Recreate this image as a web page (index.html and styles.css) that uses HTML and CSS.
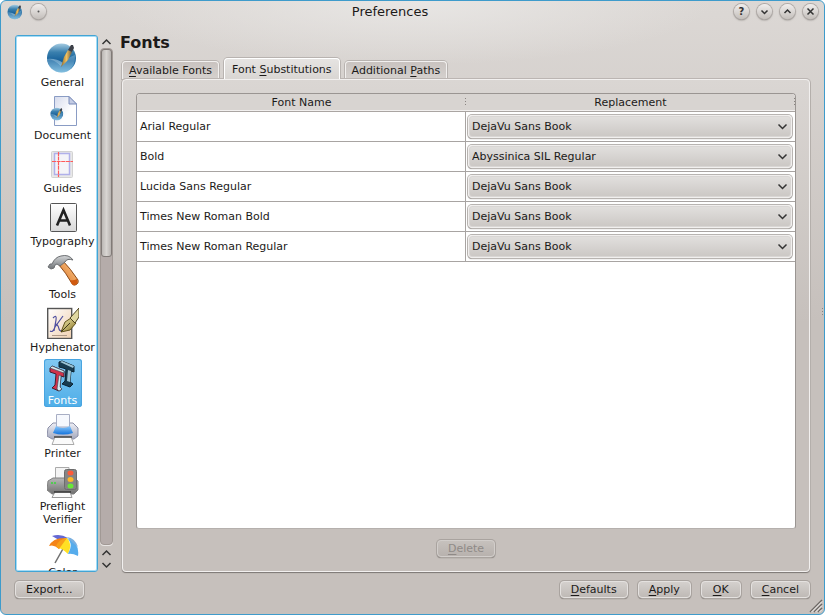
FILE: index.html
```html
<!DOCTYPE html>
<html lang="en">
<head>
<meta charset="utf-8">
<title>Preferences</title>
<link rel="stylesheet" href="styles.css">
</head>
<body>
<svg class="defs" width="0" height="0" aria-hidden="true">
  <defs>
    <linearGradient id="ball" x1="0" y1="0" x2="0" y2="1"><stop offset="0" stop-color="#a4cbe2"/><stop offset=".3" stop-color="#3a80ae"/><stop offset=".6" stop-color="#16609a"/><stop offset="1" stop-color="#6fb3d8"/></linearGradient>
    <linearGradient id="brush" x1="0" y1="0" x2="1" y2="0"><stop offset="0" stop-color="#8a6a30"/><stop offset=".5" stop-color="#f0c060"/><stop offset="1" stop-color="#6a5a40"/></linearGradient>
    <linearGradient id="paper" x1="0" y1="0" x2="1" y2="1"><stop offset="0" stop-color="#d5daec"/><stop offset=".6" stop-color="#ffffff"/></linearGradient>
    <linearGradient id="key" x1="0" y1="0" x2="0" y2="1"><stop offset="0" stop-color="#ffffff"/><stop offset="1" stop-color="#d8d8d8"/></linearGradient>
    <linearGradient id="steel" x1="0" y1="0" x2="0" y2="1"><stop offset="0" stop-color="#d4d6d8"/><stop offset="1" stop-color="#6f7377"/></linearGradient>
    <linearGradient id="wood" x1="0" y1="1" x2="1" y2="0"><stop offset="0" stop-color="#d86a18"/><stop offset="1" stop-color="#ffd49a"/></linearGradient>
    <linearGradient id="gold" x1="0" y1="0" x2="1" y2="1"><stop offset="0" stop-color="#f6efb8"/><stop offset="1" stop-color="#8a7420"/></linearGradient>
    <linearGradient id="sheet" x1="0" y1="0" x2="1" y2="1"><stop offset="0" stop-color="#ffffff"/><stop offset="1" stop-color="#f0d0b0"/></linearGradient>
    <linearGradient id="blue" x1="0" y1="0" x2="0" y2="1"><stop offset="0" stop-color="#8cc8fa"/><stop offset="1" stop-color="#1474dc"/></linearGradient>
    <linearGradient id="shell" x1="0" y1="0" x2="0" y2="1"><stop offset="0" stop-color="#eeeff6"/><stop offset="1" stop-color="#a4a8bc"/></linearGradient>
    <linearGradient id="dark" x1="0" y1="0" x2="0" y2="1"><stop offset="0" stop-color="#b8b8b8"/><stop offset="1" stop-color="#707070"/></linearGradient>
    <symbol id="globe" viewBox="0 0 32 32">
      <circle cx="15.500" cy="16" r="14.500" fill="url(#ball)"/>
      <path d="M1 17 Q8 17 15 23 Q20 16 29 13 Q30 25 20 30 Q8 32 3 24Z" fill="#a5d4ee" opacity=".35"/>
      <path d="M1 17 Q8 17 15 24 L17 21 Q10 16 1 17Z" fill="#c0e0f2" opacity=".5"/>
      <path d="M15 25 L18 15 L22 8 L26 10 L22 18Z" fill="url(#brush)"/>
      <path d="M22 8 L25 3 L27 3 L28 6 L26 10Z" fill="#3c4048"/>
    </symbol>
  </defs>
</svg>

<div class="window">
  <header class="titlebar">
    <div class="title-buttons">
      <svg class="app-icon" aria-hidden="true"><use href="#globe"/></svg>
      <button class="round" aria-label="On all desktops"><svg viewBox="0 0 15 15"><circle cx="7.500" cy="7.500" r="1" fill="#555"/></svg></button>
    </div>
    <h1 class="title">Preferences</h1>
    <div class="title-buttons">
      <button class="round help" aria-label="Help">?</button>
      <button class="round" aria-label="Minimize"><svg viewBox="0 0 15 15"><path d="M4.500 6.500L7.500 9.500L10.500 6.500"/></svg></button>
      <button class="round" aria-label="Maximize"><svg viewBox="0 0 15 15"><path d="M4.500 9L7.500 6L10.500 9"/></svg></button>
      <button class="round" aria-label="Close"><svg viewBox="0 0 15 15"><path d="M4.500 4.500L10.500 10.500M10.500 4.500L4.500 10.500"/></svg></button>
    </div>
  </header>

  <div class="content">
    <nav class="sidebar" aria-label="Sections">
      <div class="viewport">
        <div class="list">
          <button class="item"><svg viewBox="0 0 32 32"><use href="#globe"/></svg><span>General</span></button>
          <button class="item"><svg viewBox="0 0 32 32"><path d="M7.500 1.500H22L29.500 9V30.500H7.500Z" fill="url(#paper)" stroke="#8a9cc4"/><path d="M22 1.500V9H29.500Z" fill="#c4cce4" stroke="#7a8cba"/><svg x="3" y="12" width="14" height="14"><use href="#globe"/></svg></svg><span>Document</span></button>
          <button class="item"><svg viewBox="0 0 32 32"><rect x="5.500" y="3.500" width="21" height="26" rx="1" fill="#e8e8e8" stroke="#d2d2d2"/><rect x="8.500" y="5.500" width="15" height="21" fill="#f4f4f8" stroke="#b0b0ea" stroke-width="1.500"/><path d="M12.500 4V29M6 13.500H27" fill="none" stroke="#ff5a5a" stroke-width="1.200" stroke-dasharray="4 .6"/></svg><span>Guides</span></button>
          <button class="item"><svg viewBox="0 0 32 32"><rect x="3.500" y="2.500" width="26" height="28" rx="1" fill="url(#key)" stroke="#555"/><path d="M10 24.500L16.500 9L23 24.500M12 19.500H21" fill="none" stroke="#222" stroke-width="2.600"/></svg><span>Typography</span></button>
          <button class="item"><svg viewBox="0 0 32 32"><path d="M12 11L16 7Q23 14 31 26Q32 30 28 31Q26 32 24 28Q19 19 12 11Z" fill="url(#wood)" stroke="#8c4a18"/><path d="M23 26Q26 27 30 25Q32 30 28 31Q26 32 24 29Z" fill="#d05a10"/><path d="M1 13L3 10L5 10Q8 3 14 2Q22 0 26 6Q20 4 18 8L13 12L10 10L8 11L7 14L4 15Z" fill="url(#steel)" stroke="#6c6f72"/></svg><span>Tools</span></button>
          <button class="item"><svg viewBox="0 0 32 32"><rect x=".7" y="1.500" width="24" height="30" fill="url(#sheet)" stroke="#555" stroke-width="1.400"/><path d="M6 11Q10 7 9 13L7 24M3 24Q6 26 8 20L16 9M8 17Q11 17 12 22Q13 25 16 23" fill="none" stroke="#5050a0" stroke-width="1.200"/><path d="M5 28.500H20" stroke="#b09a88"/><path d="M14 25L18 15L24 11L29 16L23 23Z" fill="url(#gold)" stroke="#62541c"/><path d="M23 11L32 1V10L28 16Z" fill="#e0d8a0" stroke="#4c4220"/><path d="M14 25L23 16" stroke="#403818"/></svg><span>Hyphenator</span></button>
          <button class="item selected" aria-current="page"><svg viewBox="0 0 32 32"><path d="M12 2L15 1L27 6V12L24 11L23 22L26 24L23 27L15 24L18 21L19 9L16 8L12 7Z" fill="#183c50" stroke="#0c2230"/><path d="M13 2L15 1L27 6L26 8ZM21 10L24 11L23 22L20 21Z" fill="#9cc4d4"/><path d="M3 8L5 6L17 11V17L14 16L13 27L15 29L12 31L5 28L8 25L9 14L6 13L3 12Z" fill="#d0324a" stroke="#402030"/><path d="M3 8L5 6L17 11V13ZM12 15L14 16L13 27L15 29L12 31L10 29Z" fill="#d6e8ee" stroke="#304858" stroke-width=".6"/></svg><span>Fonts</span></button>
          <button class="item"><svg viewBox="0 0 32 32"><path d="M1 15L6 10H26L31 15V23L27 26H5L0 23Z" fill="url(#shell)" stroke="#8c90a8"/><path d="M9.500 1.500H22.500V14H9.500Z" fill="#f6f8fd" stroke="#a8aec4"/><path d="M9 13Q16 17 23 13L26 20Q16 23 6 20Z" fill="url(#blue)"/><path d="M8 24H24L27 31.500H5Z" fill="#fafafa" stroke="#aaa"/><path d="M7 24H25" stroke="#444" stroke-width="1.500"/></svg><span>Printer</span></button>
          <button class="item"><svg viewBox="0 0 32 32"><path d="M8.500 1.500H22V13H8.500Z" fill="#f4f4f4" stroke="#aaa"/><path d="M1 15L6 12H26L31 15V24L27 28H5L0 24Z" fill="url(#dark)" stroke="#808080"/><circle cx="5" cy="17" r="1" fill="#38d838"/><circle cx="8" cy="17" r="1" fill="#38d838"/><path d="M8 26H23L25 31.500H5Z" fill="#fafafa" stroke="#999"/><path d="M7 26H24" stroke="#333" stroke-width="1.500"/><rect x="17.500" y="3.500" width="12" height="20" rx="2" fill="#858585" stroke="#6c6c6c"/><ellipse cx="23.500" cy="7" rx="3" ry="2.500" fill="#ff5a38"/><ellipse cx="23.500" cy="13.500" rx="3" ry="2.500" fill="#ffb828"/><ellipse cx="23.500" cy="20" rx="3" ry="2.500" fill="#68e838"/></svg><span>Preflight<br>Verifier</span></button>
          <button class="item"><svg viewBox="0 0 32 32"><path d="M17 15L8 31" stroke="#707070" stroke-width="1.500"/><path d="M5 4Q13 1 21 6L12 8Z" fill="#6468d4"/><path d="M2 14Q6 5 20 6L12 17Q7 12 2 14Z" fill="#f48418"/><path d="M20 6Q13 7 11 16Q15 16 21 22Q26 12 20 6Z" fill="#ffe024"/><path d="M20 6Q12 7 9 14L12 17Z" fill="#f8a018"/><path d="M20 6Q27 12 21 22Q25 21 31 24Q33 11 20 6Z" fill="#56acec"/><path d="M20 5Q28 6 31 15L26 11Z" fill="#7ab0e0"/></svg><span>Color</span></button>
        </div>
      </div>
      <div class="scrollbar">
        <button class="arrow" aria-label="Scroll up"><svg viewBox="0 0 13 13"><path d="M2.500 9L6.500 5L10.500 9"/></svg></button>
        <div class="track"><div class="thumb"></div></div>
        <button class="arrow" aria-label="Scroll up"><svg viewBox="0 0 13 13"><path d="M2.500 9L6.500 5L10.500 9"/></svg></button>
        <button class="arrow" aria-label="Scroll down"><svg viewBox="0 0 13 13"><path d="M2.500 4L6.500 8L10.500 4"/></svg></button>
      </div>
    </nav>

    <main class="page">
      <h2 class="heading">Fonts</h2>
      <div class="tabs" role="tablist">
        <button class="tab" role="tab"><u>A</u>vailable Fonts</button>
        <button class="tab active" role="tab" aria-selected="true">Font <u>S</u>ubstitutions</button>
        <button class="tab" role="tab">Additional <u>P</u>aths</button>
      </div>
      <section class="panel" role="tabpanel">
        <div class="table-frame">
          <table>
            <thead><tr><th>Font Name</th><th>Replacement</th></tr></thead>
            <tbody>
              <tr><td>Arial Regular</td><td><div class="combo"><select aria-label="Replacement for Arial Regular"><option>DejaVu Sans Book</option></select><svg viewBox="0 0 13 13"><path d="M2.500 4.500L6.500 8.500L10.500 4.500"/></svg></div></td></tr>
              <tr><td>Bold</td><td><div class="combo"><select aria-label="Replacement for Bold"><option>Abyssinica SIL Regular</option></select><svg viewBox="0 0 13 13"><path d="M2.500 4.500L6.500 8.500L10.500 4.500"/></svg></div></td></tr>
              <tr><td>Lucida Sans Regular</td><td><div class="combo"><select aria-label="Replacement for Lucida Sans Regular"><option>DejaVu Sans Book</option></select><svg viewBox="0 0 13 13"><path d="M2.500 4.500L6.500 8.500L10.500 4.500"/></svg></div></td></tr>
              <tr><td>Times New Roman Bold</td><td><div class="combo"><select aria-label="Replacement for Times New Roman Bold"><option>DejaVu Sans Book</option></select><svg viewBox="0 0 13 13"><path d="M2.500 4.500L6.500 8.500L10.500 4.500"/></svg></div></td></tr>
              <tr><td>Times New Roman Regular</td><td><div class="combo"><select aria-label="Replacement for Times New Roman Regular"><option>DejaVu Sans Book</option></select><svg viewBox="0 0 13 13"><path d="M2.500 4.500L6.500 8.500L10.500 4.500"/></svg></div></td></tr>
            </tbody>
          </table>
        </div>
        <button class="btn" disabled><u>D</u>elete</button>
      </section>
    </main>
  </div>

  <footer class="footer">
    <button class="btn export">Export...</button>
    <button class="btn"><u>D</u>efaults</button>
    <button class="btn"><u>A</u>pply</button>
    <button class="btn"><u>O</u>K</button>
    <button class="btn"><u>C</u>ancel</button>
  </footer>
  <div class="edge-handle"></div>
  <svg class="grip" viewBox="0 0 14 14" aria-hidden="true"><path d="M1 13L13 1M5 13L13 5M9 13L13 9" stroke="#6e6966" stroke-width="1.500"/><path d="M2.500 13L13 2.500M6.500 13L13 6.500M10.500 13L13 10.500" stroke="#f4f2f0"/></svg>
</div>
</body>
</html>
```
FILE: styles.css
```css
* {
  box-sizing: border-box;
}

body {
  margin: 0;
  background: #fff;
  color: #1c1a19;
  font: 11px/13px "DejaVu Sans", sans-serif;
}

button,
select {
  margin: 0;
  padding: 0;
  border: 0;
  background: none;
  color: inherit;
  font: inherit;
}

u {
  text-underline-offset: 2px;
}

.defs {
  position: absolute;
}

.window {
  position: relative;
  display: flex;
  flex-direction: column;
  height: 100vh;
  border: 1px solid #3e9bcb;
  border-radius: 6px;
  padding: 0 14px 16px;
  background:
    radial-gradient(ellipse 300px 64px at 50% 0, #e8e6e4, transparent),
    linear-gradient(#dcd8d5, #c6c0bc 320px);
}

/* Title bar */

.titlebar {
  display: flex;
  align-items: center;
  height: 21px;
  margin: 0 -8px;
}

.title {
  flex: 1;
  margin: 0;
  font-size: 13px;
  font-weight: normal;
  text-align: center;
}

.title-buttons {
  display: flex;
  align-items: center;
  gap: 8px;
}

.app-icon {
  width: 16px;
  height: 16px;
}

.round {
  width: 15px;
  height: 15px;
  border-radius: 50%;
  background: linear-gradient(#f0eeed, #c4bfbb);
  box-shadow: 0 0 0 1px #b0aba8, 0 1px 2px #6e6966;
  line-height: 15px;
}

.help {
  color: #333;
  font-size: 10px;
  font-weight: bold;
}

.round svg {
  display: block;
}

.round path,
.arrow path,
.combo path {
  fill: none;
  stroke: #333;
  stroke-width: 1.5;
}

/* Section list */

.content {
  display: flex;
  flex: 1;
  gap: 7px;
  min-height: 0;
  padding-top: 13px;
}

.sidebar {
  display: flex;
  gap: 2px;
}

.viewport {
  width: 83px;
  overflow: hidden;
  border: 1px solid #43a4d4;
  border-radius: 3px;
  background: #fff;
  box-shadow: inset 0 0 0 1px #a4dcf6;
}

.list {
  display: flex;
  flex-direction: column;
  align-items: center;
  gap: 5px;
  width: 93px;
  padding-top: 5px;
}

.item {
  display: flex;
  flex: none;
  flex-direction: column;
  align-items: center;
  gap: 2px;
  min-width: 38px;
  padding: 1px 3px 0;
  border-radius: 3px;
}

.item > svg {
  width: 32px;
  height: 32px;
}

.selected {
  background: linear-gradient(#82c8f2, #4eaee8);
  box-shadow: inset 0 0 0 1px #48a4e0;
  color: #fff;
}

.scrollbar {
  display: flex;
  flex-direction: column;
  width: 13px;
}

.arrow {
  height: 13px;
}

.arrow svg {
  display: block;
}

.track {
  flex: 1;
  margin-bottom: 1px;
  border: 1px solid #a19995;
  border-radius: 4px;
  background: #b5acaa;
  box-shadow: 0 1px 0 #e8e5e3;
}

.thumb {
  height: 42%;
  border: 1px solid #807a77;
  border-radius: 3px;
  background: linear-gradient(90deg, #bcb8b5, #d8d5d2 50%, #b8b3b0);
}

/* Page */

.page {
  display: flex;
  flex: 1;
  flex-direction: column;
  min-width: 0;
}

.heading {
  margin: 0;
  font-size: 16px;
  line-height: 15px;
}

.tabs {
  display: flex;
  align-items: flex-end;
  gap: 5px;
  height: 29px;
  padding-left: 2px;
}

.tab {
  height: 18px;
  padding: 0 6px;
  border: 1px solid #f2f0ef;
  border-bottom: 0;
  border-radius: 4px 4px 0 0;
  background: linear-gradient(#c9c3c0, #d5d1ce);
  box-shadow: 0 0 0 1px #b8b3b0;
}

.active {
  z-index: 1;
  height: 21px;
  padding: 0 7px;
  border-color: #fff;
  background: linear-gradient(#e6e4e2, #d9d6d3);
  clip-path: inset(-2px -2px 0);
}

.panel {
  display: flex;
  flex: 1;
  flex-direction: column;
  align-items: center;
  gap: 11px;
  min-height: 0;
  margin-left: 2px;
  padding: 13px 13px 14px;
  border: 1px solid #f2f0ef;
  border-radius: 4px;
  background: linear-gradient(#dad6d3, #c6c0bc 242px);
  box-shadow: 0 1px 1px #7d7774, 0 0 0 1px #bbb5b2;
}

.table-frame {
  flex: 1;
  width: 100%;
  min-height: 0;
  border: 1px solid #9a9592;
  border-bottom-color: #b5b0ad;
  border-radius: 4px 4px 3px 3px;
  background: #fff;
}

table {
  width: 100%;
  border-collapse: separate;
  border-spacing: 0;
  table-layout: fixed;
}

th {
  height: 18px;
  padding: 0;
  border-bottom: 1px solid #aaa5a2;
  background:
    repeating-linear-gradient(#8a8582 0 1px, #d8d4d1 1px 3px) right center / 1px 9px no-repeat,
    #d8d4d1;
  box-shadow: inset 0 -1px 0 #f2f0ef;
  font-weight: normal;
}

th:first-child {
  border-top-left-radius: 3px;
}

th:last-child {
  border-top-right-radius: 3px;
}

td {
  height: 30px;
  padding: 0 3px;
  border-bottom: 1px solid #a8a4a2;
}

td:first-child {
  border-right: 1px solid #a8a4a2;
}

td:last-child {
  padding: 0 3px 0 2px;
}

.combo {
  display: grid;
  align-items: center;
}

.combo select,
.combo svg {
  grid-area: 1 / 1;
}

.combo select {
  width: 100%;
  height: 23px;
  padding: 0 24px 0 3px;
  border: 1px solid #f1efee;
  border-radius: 4px;
  background: linear-gradient(#e2e0de, #cbc7c4);
  box-shadow: inset 0 0 0 1px #d9d6d4, 0 0 0 1px #b8b4b1, 0 1px 1px #6e6966;
  appearance: none;
}

.combo svg {
  justify-self: end;
  width: 13px;
  height: 13px;
  margin-right: 3px;
  pointer-events: none;
}

/* Buttons */

.btn {
  height: 17px;
  min-width: 40px;
  padding: 0 10px;
  border: 1px solid #e4e1df;
  border-radius: 4px;
  background: linear-gradient(#d4d0cd, #bfbab6);
  box-shadow: 0 0 0 1px #a9a39f, 0 1px 1px #5f5a57;
  line-height: 15px;
}

.btn:disabled {
  border-color: #d2cecb;
  background: linear-gradient(#c6c1bd, #b8b2ae);
  color: #8f8a87;
}

.footer {
  display: flex;
  gap: 10px;
  padding-top: 9px;
}

.export {
  margin-right: auto;
}

/* Window edges */

.edge-handle {
  position: absolute;
  top: 50%;
  right: 1px;
  width: 1px;
  height: 7px;
  background: repeating-linear-gradient(#8a8582 0 1px, transparent 1px 3px);
}

.grip {
  position: absolute;
  right: 1px;
  bottom: 1px;
  width: 14px;
  height: 14px;
}
```
